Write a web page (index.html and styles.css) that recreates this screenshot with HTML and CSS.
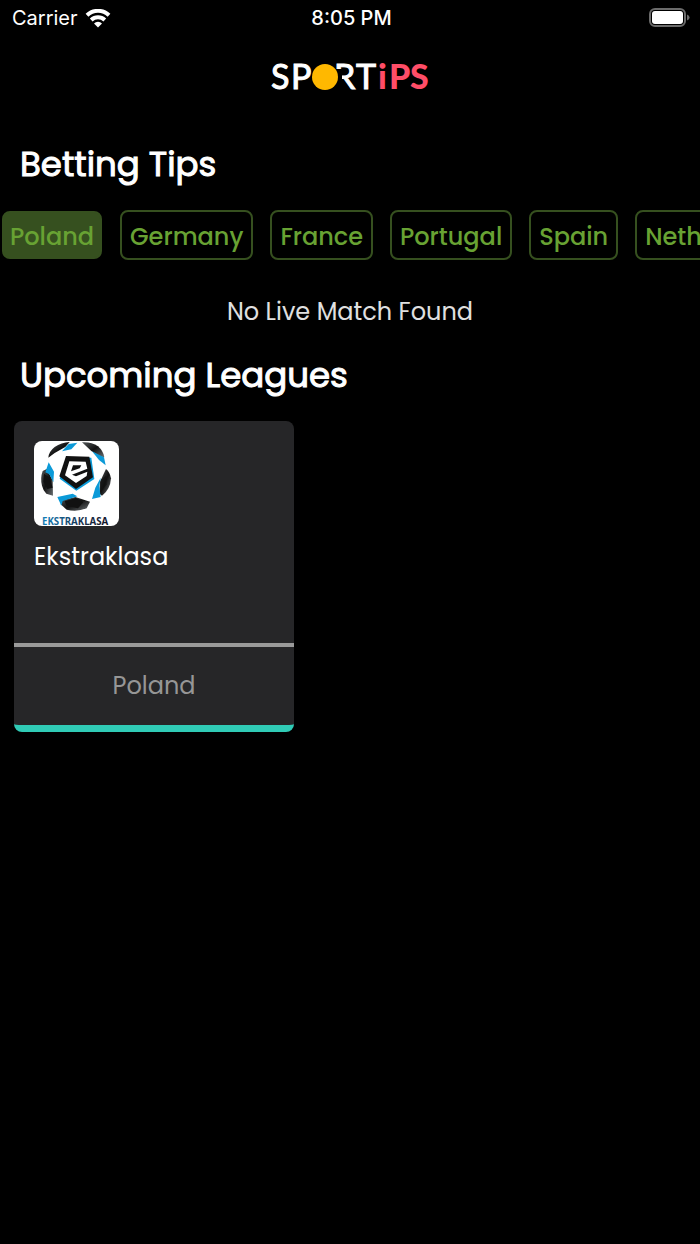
FILE: index.html
```html
<!DOCTYPE html>
<html lang="en">
<head>
  <meta charset="UTF-8">
  <meta name="viewport" content="width=device-width, initial-scale=1">
  <title>Sportips - Betting Tips</title>
  <link rel="stylesheet" href="styles.css">
</head>
<body>
  <div class="status-bar">
    <div class="carrier">
      <span>Carrier</span>
      <svg width="26" height="19" viewBox="0 0 26 19" aria-hidden="true">
        <g fill="none" stroke="#fff" stroke-width="4">
          <path d="M2 6.2A16 16 0 0 1 24 6.2"/>
          <path d="M6.2 11A10 10 0 0 1 19.8 11"/>
        </g>
        <path d="M9 14.4a5.8 5.8 0 0 1 8 0L13 18.6z" fill="#fff"/>
      </svg>
    </div>
    <time class="clock">8:05 PM</time>
    <svg class="battery" width="42" height="20" viewBox="0 0 42 20" aria-hidden="true">
      <rect x="1" y="1" width="35" height="17" rx="5" fill="none" stroke="#6b6b6b" stroke-width="2"/>
      <rect x="3" y="3" width="31" height="13" rx="3" fill="#fff"/>
      <path d="M38 6.5q2.6.8 2.6 3t-2.6 3z" fill="#6b6b6b"/>
    </svg>
  </div>

  <header>
    <svg class="logo" width="170" height="56" viewBox="0 0 170 56" role="img" aria-label="Sportips">
      <g class="logo-light">
        <text x="6" y="40">S</text>
        <text x="26" y="40">P</text>
        <text x="69" y="40">R</text>
        <text x="91" y="40">T</text>
      </g>
      <rect x="60" y="20" width="17" height="24" fill="#000"/>
      <circle cx="60" cy="28" r="13" fill="#ffb800"/>
      <g class="logo-bold">
        <text x="113" y="40">i</text>
        <text x="124" y="40">P</text>
        <text x="145" y="40">S</text>
      </g>
    </svg>
  </header>

  <main>
    <h2>Betting Tips</h2>
    <nav class="countries">
      <button type="button" class="active">Poland</button>
      <button type="button">Germany</button>
      <button type="button">France</button>
      <button type="button">Portugal</button>
      <button type="button">Spain</button>
      <button type="button">Netherlands</button>
    </nav>
    <p class="empty">No Live Match Found</p>

    <h2>Upcoming Leagues</h2>
    <div class="leagues">
      <article class="league">
        <div class="league-info">
          <svg class="badge" viewBox="0 0 255 255" role="img" aria-label="Ekstraklasa logo">
            <defs>
              <linearGradient id="panel" x1="0" y1="0" x2="1" y2="1">
                <stop offset="0" stop-color="#55595b"/>
                <stop offset=".5" stop-color="#111"/>
                <stop offset="1" stop-color="#6b7073"/>
              </linearGradient>
              <linearGradient id="word" x1="0" x2="1">
                <stop offset="0" stop-color="#1481bb"/>
                <stop offset=".6" stop-color="#17324f"/>
                <stop offset="1" stop-color="#111629"/>
              </linearGradient>
            </defs>
            <rect width="255" height="255" rx="24" fill="#fff"/>
            <!-- outer panels -->
            <g fill="url(#panel)">
              <path d="M43 50Q44 32 62 18Q82 5 107 3L94 18 62 36z"/>
              <path d="M144 4Q172 2 192 16Q208 30 211 49L196 46 172 30z"/>
              <path d="M38 84L26 90Q18 112 24 134Q28 150 37 158L57 164 56 118z"/>
              <path d="M216 84Q228 94 231 112Q229 146 204 164L196 158 198 122z"/>
              <path d="M84 178L124 168 168 182 158 202Q128 214 98 206L80 190z"/>
            </g>
            <path d="M92 181l34-10 22 13-16 18-34-7z" fill="#111"/>
            <path d="M30 98l18 12 8 30-16 4-12-22z" fill="#111"/>
            <path d="M200 116l16-12 2 26-18 24z" fill="#111" fill-opacity=".7"/>
            <g fill="#0b9ad8">
              <path d="M104 9l26-4-18 20-28 6z"/>
              <path d="M174 31l36 18 5 24-20-16z"/>
              <path d="M44 64l16 28-2 32-12-24-12-6z"/>
              <path d="M200 110l-4 26 4 32-26 6 10-34z"/>
              <path d="M70 168l46-10 14 8-44 14-4 14z"/>
            </g>
            <!-- centre pentagon -->
            <path d="M100 48l72 2 9 64-54 35-50-36z" fill="#0b9ad8"/>
            <path d="M96 45l70 2 11 62-51 35-50-38z" fill="#111"/>
            <path d="M106 61l49 1 5 21-46 18 12 5 34-14-2 13-32 21-33-23z" fill="#fff"/>
            <path d="M117 73h25l-5 9-26 9z" fill="#111"/>
            <text x="24" y="251" class="badge-text" fill="url(#word)">EKSTRAKLASA</text>
          </svg>
          <h3>Ekstraklasa</h3>
        </div>
        <p class="league-country">Poland</p>
      </article>
    </div>
  </main>
</body>
</html>
```
FILE: styles.css
```css
* { box-sizing: border-box; }
body { margin: 0; background: #000; color: #fff; overflow-x: hidden;
  font-family: Poppins, Inter, "Liberation Sans", sans-serif; }

.status-bar { display: grid; grid-template-columns: 1fr auto 1fr; align-items: center;
  height: 36px; padding: 0 9px 0 12px; font-family: Inter, sans-serif; font-size: 20px; }
.carrier { display: flex; align-items: center; gap: 7px; }
.clock { font-weight: 500; }
.battery { justify-self: end; }

header { display: flex; justify-content: center; padding: 13px 0 11px; }
.logo { display: block; overflow: visible; font-family: Lato, sans-serif; font-size: 34px; }
.logo-light { fill: #fff; stroke: #fff; stroke-width: 1px; font-weight: 400; }
.logo-bold { fill: #ff4d67; font-weight: 900; }

h2 { margin: 0; padding: 24px 20px 0; font-size: 34px; font-weight: 400; line-height: 48px;
  -webkit-text-stroke: 1px #fff; }

.countries { display: flex; align-items: center; gap: 17px; padding: 22px 0 0 2px;
  overflow: hidden; }
.countries button { flex: none; height: 50px; padding: 2px 8px 0; background: #000;
  color: #68a233; border: 2px solid #36501f; border-radius: 8px;
  font: inherit; font-size: 24px; font-weight: 500; cursor: pointer; }
.countries .active { height: 48px; padding: 2px 6px 0; margin-right: 1px; background: #36501f; }

.empty { margin: 0; padding-top: 34px; text-align: center; font-size: 24px;
  line-height: 36px; color: #e0e0e0; }
.empty + h2 { padding-top: 21px; }

.leagues { display: flex; gap: 14px; padding: 22px 14px; }
.league { width: 280px; background: #262628; border-radius: 8px; overflow: hidden;
  border-bottom: 7px solid #30cbb6; }
.league-info { height: 222px; padding: 20px; }
.badge { display: block; width: 85px; height: 85px; overflow: visible; }
.badge-text { font-family: "Noto Sans", sans-serif; font-size: 29px; font-weight: 700; }
.league h3 { margin: 13px 0 0; font-size: 24px; font-weight: 400; line-height: 36px; }
.league-country { margin: 0; border-top: 4px solid #9a9a9a; text-align: center;
  font-size: 24px; line-height: 78px; color: #969696; }
```
